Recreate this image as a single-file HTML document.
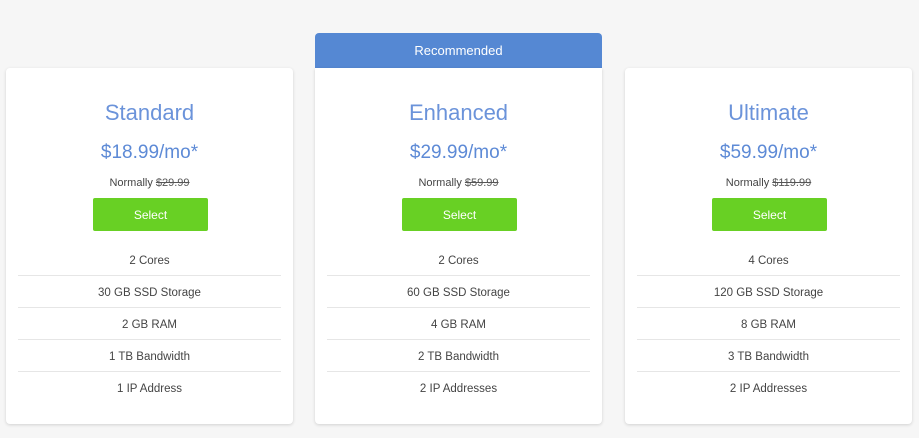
<!DOCTYPE html><html><head><style>
body{margin:0;background:#f6f6f6;font-family:"Liberation Sans",sans-serif;width:919px;height:438px;position:relative;overflow:hidden}
.card{position:absolute;top:68px;width:287px;height:356px;background:#fff;border-radius:4px;box-shadow:0 1px 3px rgba(0,0,0,.15);text-align:center}
.rec{position:absolute;left:315px;top:33px;width:287px;height:35px;background:#5588d3;border-radius:4px 4px 0 0;color:#fff;font-size:13px;line-height:35px;text-align:center}
.t{position:absolute;top:31px;width:100%;font-size:22px;color:#6b93da;line-height:28px}
.p{position:absolute;top:73px;width:100%;font-size:19px;color:#5d8ad6;line-height:24px}
.n{position:absolute;top:108px;width:100%;font-size:11px;color:#444;line-height:14px}
.n s{color:#555}
.b{position:absolute;top:130px;left:87px;width:115px;height:33px;background:#68d024;border-radius:2px;color:#fff;font-size:12px;line-height:35px}
.f{position:absolute;top:176px;left:12px;right:12px}
.f div{height:31px;line-height:35px;font-size:11.5px;color:#444;border-bottom:1px solid #e6e6e6}
.f div:last-child{border:none}
</style></head><body>
<div class="rec">Recommended</div>
<div class="card" style="left:6px"><div class="t">Standard</div><div class="p">$18.99/mo*</div><div class="n">Normally <s>$29.99</s></div><div class="b">Select</div><div class="f"><div>2 Cores</div><div>30 GB SSD Storage</div><div>2 GB RAM</div><div>1 TB Bandwidth</div><div>1 IP Address</div></div></div>
<div class="card" style="left:315px;border-radius:0 0 4px 4px"><div class="t">Enhanced</div><div class="p">$29.99/mo*</div><div class="n">Normally <s>$59.99</s></div><div class="b">Select</div><div class="f"><div>2 Cores</div><div>60 GB SSD Storage</div><div>4 GB RAM</div><div>2 TB Bandwidth</div><div>2 IP Addresses</div></div></div>
<div class="card" style="left:625px"><div class="t">Ultimate</div><div class="p">$59.99/mo*</div><div class="n">Normally <s>$119.99</s></div><div class="b">Select</div><div class="f"><div>4 Cores</div><div>120 GB SSD Storage</div><div>8 GB RAM</div><div>3 TB Bandwidth</div><div>2 IP Addresses</div></div></div>
</body></html>
